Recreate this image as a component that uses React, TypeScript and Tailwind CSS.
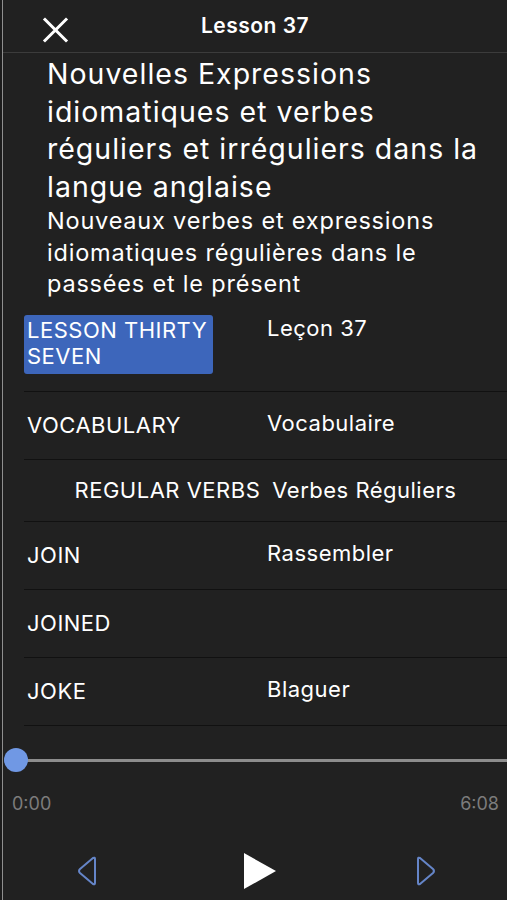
import { useState } from 'react';

const ROWS = [
  { en: 'VOCABULARY', fr: 'Vocabulaire' },
  { en: 'REGULAR VERBS', fr: 'Verbes Réguliers', heading: true },
  { en: 'JOIN', fr: 'Rassembler' },
  { en: 'JOINED', fr: '' },
  { en: 'JOKE', fr: 'Blaguer' },
];

export default function App() {
  const [playing, setPlaying] = useState(false);

  return (
    <div className="h-[900px] w-full overflow-hidden bg-[#1c1c1c] pl-[2px] font-['Inter','Liberation_Sans',sans-serif] text-white">
      <div className="flex h-full flex-col border-l border-[#8f8f8f] bg-[#212121]">
        {/* Header */}
        <div className="relative flex h-[53px] shrink-0 items-center justify-center border-b border-[#3c3c3c]">
          <button className="absolute left-[38px] top-[16px] p-0">
            <svg width="29" height="28" viewBox="0 0 29 28" fill="none" stroke="white" strokeWidth="3" strokeLinecap="square">
              <path d="M4 3.5 L25 24.5 M25 3.5 L4 24.5" />
            </svg>
          </button>
          <span className="text-[21px] font-semibold tracking-[0.5px]">Lesson 37</span>
        </div>

        {/* Lesson title */}
        <div className="pl-[44px] pr-[20px] pt-[2px]">
          <h1 className="text-[28.5px] leading-[37.5px] font-normal tracking-[1px]">
            Nouvelles Expressions idiomatiques et verbes réguliers et irréguliers dans la langue anglaise
          </h1>
          <p className="pr-[40px] text-[23.5px] leading-[31.5px] tracking-[0.8px]">
            Nouveaux verbes et expressions idiomatiques régulières dans le passées et le présent
          </p>
        </div>

        {/* Rows */}
        <div className="ml-[21px] text-[22px] tracking-[0.5px]">
          <div className="flex h-[92px] items-start border-b border-[#111] pt-[15px]">
            <div className="w-[243px] shrink-0">
              <div className="w-[189px] rounded-[3px] bg-[#3d66bb] px-[3px] pt-[2px] pb-[5px] leading-[26px]">
                LESSON THIRTY SEVEN
              </div>
            </div>
            <span className="leading-[26px]">Leçon 37</span>
          </div>
          {ROWS.map((r) =>
            r.heading ? (
              <div key={r.en} className="flex h-[62px] items-center justify-center gap-[12px] border-b border-[#111]">
                <span>{r.en}</span>
                <span>{r.fr}</span>
              </div>
            ) : (
              <div key={r.en} className="flex h-[68px] items-center border-b border-[#111]">
                <span className="w-[243px] shrink-0 pl-[3px]">{r.en}</span>
                <span className="-mt-[4px]">{r.fr}</span>
              </div>
            )
          )}
        </div>

        {/* Player */}
        <div className="mt-auto pb-[10px]">
          <div className="relative flex h-[26px] items-center">
            <div className="ml-[14px] h-[3px] flex-1 bg-[#8d8d8d]" />
            <div className="absolute left-[1px] top-[1px] h-[24px] w-[24px] rounded-full bg-[#7098e4]" />
          </div>
          <div className="mt-[17px] flex justify-between pl-[9px] pr-[8px] text-[18px] text-[#7c7c7c]">
            <span>0:00</span>
            <span>6:08</span>
          </div>
          <div className="mt-[35px] flex items-center">
            <button className="ml-[72px]">
              <svg width="24" height="30" viewBox="0 0 24 30" fill="none" stroke="#6585c8" strokeWidth="2" strokeLinejoin="round">
                <path d="M20 3 L20 27 Q20 29 18 28 L5 17 Q3 15 5 13 L18 2 Q20 1 20 3 Z" />
              </svg>
            </button>
            <button className="ml-[144px]" onClick={() => setPlaying((p) => !p)}>
              <svg width="34" height="38" viewBox="0 0 34 38" fill="white">
                <path d="M1 1 L33 19 L1 37 Z" />
              </svg>
            </button>
            <button className="ml-[137px]">
              <svg width="24" height="30" viewBox="0 0 24 30" fill="none" stroke="#6585c8" strokeWidth="2" strokeLinejoin="round">
                <path d="M4 3 L4 27 Q4 29 6 28 L19 17 Q21 15 19 13 L6 2 Q4 1 4 3 Z" />
              </svg>
            </button>
          </div>
        </div>
      </div>
    </div>
  );
}
